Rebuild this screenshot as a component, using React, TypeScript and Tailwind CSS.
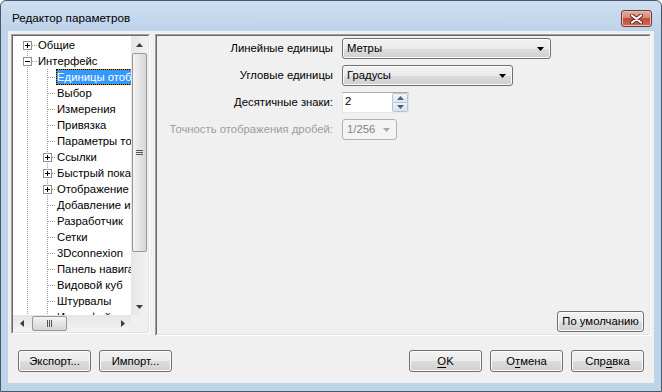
import React from "react";

type Item = {
  t: string;
  l: 0 | 1;
  e?: "plus" | "minus";
  sel?: boolean;
};

const ITEMS: Item[] = [
  { t: "Общие", l: 0, e: "plus" },
  { t: "Интерфейс", l: 0, e: "minus" },
  { t: "Единицы отображения", l: 1, sel: true },
  { t: "Выбор", l: 1 },
  { t: "Измерения", l: 1 },
  { t: "Привязка", l: 1 },
  { t: "Параметры точек", l: 1 },
  { t: "Ссылки", l: 1, e: "plus" },
  { t: "Быстрый показ", l: 1, e: "plus" },
  { t: "Отображение", l: 1, e: "plus" },
  { t: "Добавление и изменение", l: 1 },
  { t: "Разработчик", l: 1 },
  { t: "Сетки", l: 1 },
  { t: "3Dconnexion", l: 1 },
  { t: "Панель навигации", l: 1 },
  { t: "Видовой куб", l: 1 },
  { t: "Штурвалы", l: 1 },
  { t: "Интерфейс пользователя", l: 1 },
];

const BTN =
  "flex items-center justify-center rounded-[3px] border border-[#707070] bg-[linear-gradient(#f2f2f2_0%,#ebebeb_50%,#dddddd_51%,#cfcfcf_100%)] shadow-[inset_0_0_0_1px_#fbfbfb] text-black";

// one column of the tree guides: dotted lines plus the optional +/- box
function Guide({
  w,
  top,
  bottom,
  horiz,
  exp,
}: {
  w: number;
  top: boolean;
  bottom: boolean;
  horiz: boolean;
  exp?: "plus" | "minus";
}) {
  const dot = { stroke: "#a0a0a0", strokeDasharray: "1 1" };
  return (
    <svg width={w} height={16} className="shrink-0" shapeRendering="crispEdges">
      {top && <line x1={10.5} y1={0} x2={10.5} y2={8} {...dot} />}
      {bottom && <line x1={10.5} y1={8} x2={10.5} y2={16} {...dot} />}
      {horiz && <line x1={exp ? 15 : 11} y1={8.5} x2={w} y2={8.5} {...dot} />}
      {exp && (
        <g>
          <rect x={6.5} y={4.5} width={8} height={8} fill="#fff" stroke="#919191" />
          <line x1={8} y1={8.5} x2={13} y2={8.5} stroke="#000" />
          {exp === "plus" && <line x1={10.5} y1={6} x2={10.5} y2={11} stroke="#000" />}
        </g>
      )}
    </svg>
  );
}

function TreeRow({ item, first }: { item: Item; first: boolean }) {
  return (
    <div className="flex h-[16px] items-stretch whitespace-nowrap">
      {item.l === 0 ? (
        <Guide w={20} top={!first} bottom horiz exp={item.e} />
      ) : (
        <>
          <Guide w={20} top bottom horiz={false} />
          <Guide w={19} top bottom horiz exp={item.e} />
        </>
      )}
      {item.sel ? (
        <span className="border border-dotted border-black bg-[#d07a12]">
          <span className="block h-[14px] bg-[#3399ff] leading-[14px] text-white">{item.t}</span>
        </span>
      ) : (
        <span className="px-[1px] leading-[16px] text-black">{item.t}</span>
      )}
    </div>
  );
}

function Arrow({ dir, color = "#3d3d3d" }: { dir: "up" | "down" | "left" | "right"; color?: string }) {
  const d = {
    up: "M3.5 0 L7 4 H0 Z",
    down: "M0 0 H7 L3.5 4 Z",
    left: "M4 0 V7 L0 3.5 Z",
    right: "M0 0 L4 3.5 L0 7 Z",
  }[dir];
  const vert = dir === "up" || dir === "down";
  return (
    <svg width={vert ? 7 : 4} height={vert ? 4 : 7}>
      <path d={d} fill={color} />
    </svg>
  );
}

function Tree() {
  return (
    <div className="h-[300px] w-[139px] shrink-0 border border-t-[#a0a0a0] border-l-[#a0a0a0] border-r-white border-b-white">
      <div className="flex h-full flex-col border border-t-[#696969] border-l-[#696969] border-r-[#e3e3e3] border-b-[#e3e3e3] bg-white">
        <div className="flex min-h-0 flex-1">
          <div className="min-w-0 flex-1 overflow-hidden pl-[4px] pt-[1px]">
            {ITEMS.map((it, i) => (
              <TreeRow key={it.t} item={it} first={i === 0} />
            ))}
          </div>
          {/* vertical scrollbar */}
          <div className="flex w-[17px] shrink-0 flex-col bg-[linear-gradient(90deg,#e6e6e6,#f3f3f3)]">
            <div className="flex h-[17px] items-center justify-center">
              <Arrow dir="up" />
            </div>
            <div className="mx-[1px] flex h-[199px] items-center justify-center rounded-[2px] border border-[#979797] bg-[linear-gradient(90deg,#f4f4f4,#e4e4e4_50%,#d6d6d6)]">
              <div className="flex flex-col gap-[1px]">
                <div className="h-[1px] w-[7px] bg-[#555]" />
                <div className="h-[1px] w-[7px] bg-[#555]" />
                <div className="h-[1px] w-[7px] bg-[#555]" />
              </div>
            </div>
            <div className="flex-1" />
            <div className="flex h-[17px] items-center justify-center">
              <Arrow dir="down" />
            </div>
          </div>
        </div>
        {/* horizontal scrollbar */}
        <div className="flex h-[17px] shrink-0">
          <div className="flex flex-1 items-stretch bg-[linear-gradient(#e6e6e6,#f3f3f3)]">
            <div className="flex w-[17px] items-center justify-center">
              <Arrow dir="left" />
            </div>
            <div className="my-[1px] ml-[2px] flex w-[35px] items-center justify-center gap-[1px] rounded-[2px] border border-[#979797] bg-[linear-gradient(#f4f4f4,#e4e4e4_50%,#d6d6d6)]">
              <div className="h-[7px] w-[1px] bg-[#555]" />
              <div className="h-[7px] w-[1px] bg-[#555]" />
              <div className="h-[7px] w-[1px] bg-[#555]" />
            </div>
            <div className="flex-1" />
            <div className="flex w-[17px] items-center justify-center">
              <Arrow dir="right" />
            </div>
          </div>
          <div className="w-[17px] bg-[#f0f0f0]" />
        </div>
      </div>
    </div>
  );
}

function Combo({ w, text, disabled }: { w: string; text: string; disabled?: boolean }) {
  return (
    <div
      className={
        disabled
          ? `flex h-[21px] ${w} items-center justify-between rounded-[3px] border border-[#adb2b5] bg-[#f4f4f4] pl-[4px] pr-[6px] text-[#838383]`
          : `flex h-[21px] ${w} items-center justify-between rounded-[3px] border border-[#707070] bg-[linear-gradient(#f2f2f2_0%,#ebebeb_50%,#dddddd_51%,#cfcfcf_100%)] pl-[4px] pr-[6px] shadow-[inset_0_0_0_1px_#fbfbfb] text-black`
      }
    >
      <span>{text}</span>
      <Arrow dir="down" color={disabled ? "#a6a6a6" : "#000"} />
    </div>
  );
}

function Spin() {
  return (
    <div className="flex h-[21px] w-[67px] border border-[#abadb3] border-l-[#e2e3ea] border-r-[#dbdfe6] border-b-[#e3e9ef] bg-white">
      <span className="flex-1 pl-[2px] leading-[17px] text-black">2</span>
      <div className="flex w-[16px] flex-col">
        <div className="flex flex-1 items-center justify-center rounded-t-[2px] border border-[#b5c3d5] bg-[linear-gradient(#f3f6fa,#dfe7f1)]">
          <Arrow dir="up" color="#4c607a" />
        </div>
        <div className="flex flex-1 items-center justify-center rounded-b-[2px] border border-t-0 border-[#b5c3d5] bg-[linear-gradient(#eef3f8,#d7e1ee)]">
          <Arrow dir="down" color="#4c607a" />
        </div>
      </div>
    </div>
  );
}

function Label({ children, dim }: { children: React.ReactNode; dim?: boolean }) {
  return (
    <div className={`flex h-[21px] items-center justify-end ${dim ? "text-[#9d9d9d]" : "text-black"}`}>
      {children}
    </div>
  );
}

function Settings() {
  return (
    <div className="h-[302px] flex-1 border border-t-[#a0a0a0] border-l-[#a0a0a0] border-r-white border-b-white">
      <div className="flex h-full flex-col border border-t-[#696969] border-l-[#696969] border-r-[#e3e3e3] border-b-[#e3e3e3] bg-[#f0f0f0] pt-[2px]">
        <div className="grid grid-cols-[176px_auto] gap-x-[9px] gap-y-[6px]">
          <Label>Линейные единицы</Label>
          <Combo w="w-[209px]" text="Метры" />
          <Label>Угловые единицы</Label>
          <Combo w="w-[171px]" text="Градусы" />
          <Label>Десятичные знаки:</Label>
          <Spin />
          <Label dim>Точность отображения дробей:</Label>
          <Combo w="w-[55px]" text="1/256" disabled />
        </div>
        <div className="flex-1" />
        <div className={`${BTN} mb-[2px] mr-[5px] h-[21px] w-[87px] self-end`}>По умолчанию</div>
      </div>
    </div>
  );
}

export default function App() {
  return (
    <div className="h-[392px] w-[662px] overflow-hidden bg-white font-['Liberation_Sans',Arial,sans-serif] text-[11.3px]">
      <div className="flex h-full w-full flex-col rounded-t-[6px] border border-[#4a5868] bg-[#bdd3ea]">
        {/* title bar */}
        <div className="flex h-[30px] shrink-0 items-start justify-between rounded-t-[6px] bg-[linear-gradient(#cddef1,#bdd3ea)] pl-[11px] pr-[9px]">
          <span className="mt-[9px] text-[11.7px] leading-[16px] text-black">Редактор параметров</span>
          <div className="mt-[9px] flex h-[17px] w-[31px] items-center justify-center rounded-[3px] border border-[#6e3a35] bg-[linear-gradient(#e7aaa0_0%,#d8897c_45%,#c24b3a_50%,#cf6a55_100%)] shadow-[inset_0_0_0_1px_#eebbb2]">
            <svg width={13} height={10}>
              <path d="M2 1.5 L11 8.5 M11 1.5 L2 8.5" stroke="#5d2a25" strokeWidth={4} strokeLinecap="round" />
              <path d="M2 1.5 L11 8.5 M11 1.5 L2 8.5" stroke="#fff" strokeWidth={2.2} strokeLinecap="round" />
            </svg>
          </div>
        </div>
        {/* client area */}
        <div className="mx-[7px] flex h-[352px] shrink-0 flex-col bg-[#f0f0f0]">
          <div className="flex gap-[5px] px-[3px] pt-[3px]">
            <Tree />
            <Settings />
          </div>
          <div className="mt-[14px] flex px-[10px]">
            <div className={`${BTN} h-[22px] w-[73px]`}>Экспорт...</div>
            <div className={`${BTN} ml-[8px] h-[22px] w-[73px]`}>Импорт...</div>
            <div className="flex-1" />
            <div className="flex gap-[8px]">
              <div className={`${BTN} h-[22px] w-[73px] border-[#3c7fb1] shadow-[inset_0_0_0_1px_#8ed4f7]`}>
                <span className="underline underline-offset-[2px]">O</span>K
              </div>
              <div className={`${BTN} h-[22px] w-[73px]`}>
                О<span className="underline underline-offset-[2px]">т</span>мена
              </div>
              <div className={`${BTN} h-[22px] w-[73px]`}>
                Спр<span className="underline underline-offset-[2px]">а</span>вка
              </div>
            </div>
          </div>
        </div>
      </div>
    </div>
  );
}
